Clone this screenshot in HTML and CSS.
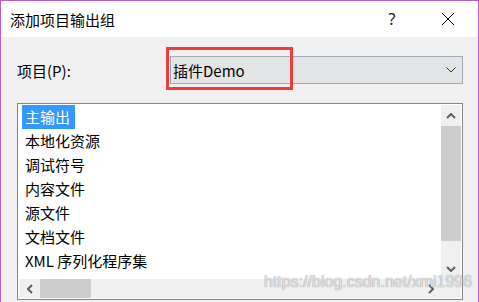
FILE: index.html
```html
<!DOCTYPE html>
<html lang="zh-CN">
<head>
  <meta charset="UTF-8">
  <title>添加项目输出组</title>
  <link rel="stylesheet" href="styles.css">
</head>
<body>
  <div class="window">
    <div class="titlebar">
      <span class="title">添加项目输出组</span>
      <span class="help">?</span>
      <span class="close">
        <svg width="14" height="14" viewBox="0 0 14 14"><path d="M1 1 L13 13 M13 1 L1 13" stroke="#000" stroke-width="1" fill="none"/></svg>
      </span>
    </div>
    <div class="dialog-body">
      <div class="project-row">
        <label class="field-label">项目(P):</label>
        <div class="combo">
          <span class="combo-value">插件Demo</span>
          <svg class="combo-arrow" width="10" height="6" viewBox="0 0 10 6"><path d="M0.5 0.5 L5 5 L9.5 0.5" stroke="#333" stroke-width="1" fill="none"/></svg>
          <span class="mark"></span>
        </div>
      </div>
      <div class="listbox">
        <ul class="items">
          <li><span class="selected">主输出</span></li>
          <li>本地化资源</li>
          <li>调试符号</li>
          <li>内容文件</li>
          <li>源文件</li>
          <li>文档文件</li>
          <li>XML 序列化程序集</li>
        </ul>
        <div class="vscroll">
          <div class="sb-btn"><svg width="10" height="6" viewBox="0 0 10 6"><path d="M1 5 L5 1 L9 5" stroke="#606060" stroke-width="2" fill="none"/></svg></div>
          <div class="vthumb"></div>
          <div class="track"></div>
          <div class="sb-btn"><svg width="10" height="6" viewBox="0 0 10 6"><path d="M1 1 L5 5 L9 1" stroke="#606060" stroke-width="2" fill="none"/></svg></div>
        </div>
        <div class="hscroll">
          <div class="sb-btn"><svg width="6" height="10" viewBox="0 0 6 10"><path d="M5 1 L1 5 L5 9" stroke="#606060" stroke-width="2" fill="none"/></svg></div>
          <div class="hthumb"></div>
          <div class="track"></div>
          <div class="sb-btn"><svg width="6" height="10" viewBox="0 0 6 10"><path d="M1 1 L5 5 L1 9" stroke="#606060" stroke-width="2" fill="none"/></svg></div>
        </div>
        <div class="corner"></div>
      </div>
    </div>
    <div class="watermark">https://blog.csdn.net/xml1996</div>
  </div>
</body>
</html>
```

FILE: styles.css
```css
body {
  margin: 0;
  font-family: "Noto Sans CJK SC", "Noto Sans", sans-serif;
  color: #000;
}
.window {
  position: relative;
  width: 479px;
  height: 302px;
  box-sizing: border-box;
  border: 1px solid #bb5fcf;
  border-bottom: none;
  background: #f0f0f0;
  overflow: hidden;
}
.titlebar {
  height: 36px;
  display: flex;
  align-items: center;
  padding-left: 9px;
  background: #fff;
  font-size: 15px;
}
.title {
  flex: 1;
}
.help {
  width: 20px;
  text-align: center;
  font-family: "Noto Sans", sans-serif;
  font-size: 16px;
  color: #222;
  margin-right: 34px;
}
.close {
  width: 24px;
  height: 24px;
  display: flex;
  align-items: center;
  justify-content: center;
  margin-right: 18px;
}
.dialog-body {
  padding: 19px 15px 0 16px;
}
.project-row {
  display: flex;
  align-items: center;
  height: 28px;
}
.field-label {
  width: 153px;
  font-size: 15px;
}
.combo {
  position: relative;
  width: 293px;
  height: 28px;
  box-sizing: border-box;
  border: 1px solid #a2abb5;
  background: #e3e4e6;
  display: flex;
  align-items: center;
  padding-left: 2px;
  font-size: 15px;
}
.combo-value {
  flex: 1;
}
.combo-arrow {
  margin-right: 6px;
}
.mark {
  position: absolute;
  left: -5px;
  top: -10px;
  width: 127px;
  height: 43px;
  box-sizing: border-box;
  border: 3px solid #f03b3b;
}
.listbox {
  margin-top: 19px;
  width: 446px;
  height: 197px;
  box-sizing: border-box;
  border: 1px solid #828790;
  padding: 1px;
  background: #fff;
  display: grid;
  grid-template-columns: 1fr 20px;
  grid-template-rows: 1fr 19px;
}
.items {
  list-style: none;
  margin: 0;
  padding: 0;
  overflow: hidden;
  font-size: 15px;
}
.items li {
  height: 24px;
  line-height: 24px;
  padding-left: 6px;
  white-space: nowrap;
}
.selected {
  display: inline-block;
  margin-left: -3px;
  padding: 0 5px 0 3px;
  background: #3399ff;
  color: #fff;
}
.vscroll {
  display: flex;
  flex-direction: column;
  background: #f0f0f0;
}
.hscroll {
  display: flex;
  background: #f0f0f0;
}
.corner {
  background: #f0f0f0;
}
.sb-btn {
  flex: 0 0 21px;
  display: flex;
  align-items: center;
  justify-content: center;
}
.track {
  flex: 1;
}
.vthumb {
  flex: 0 0 115px;
  background: #cdcdcd;
}
.hthumb {
  flex: 0 0 51px;
  background: #cdcdcd;
}
.watermark {
  position: absolute;
  left: 263px;
  top: 272px;
  font-family: "Liberation Sans", Arial, sans-serif;
  font-size: 16px;
  line-height: 18px;
  color: rgba(255, 255, 255, 0.75);
  text-shadow: 0 0 1px rgba(0, 0, 0, 0.35), 0 0 1px rgba(0, 0, 0, 0.25);
}
```
